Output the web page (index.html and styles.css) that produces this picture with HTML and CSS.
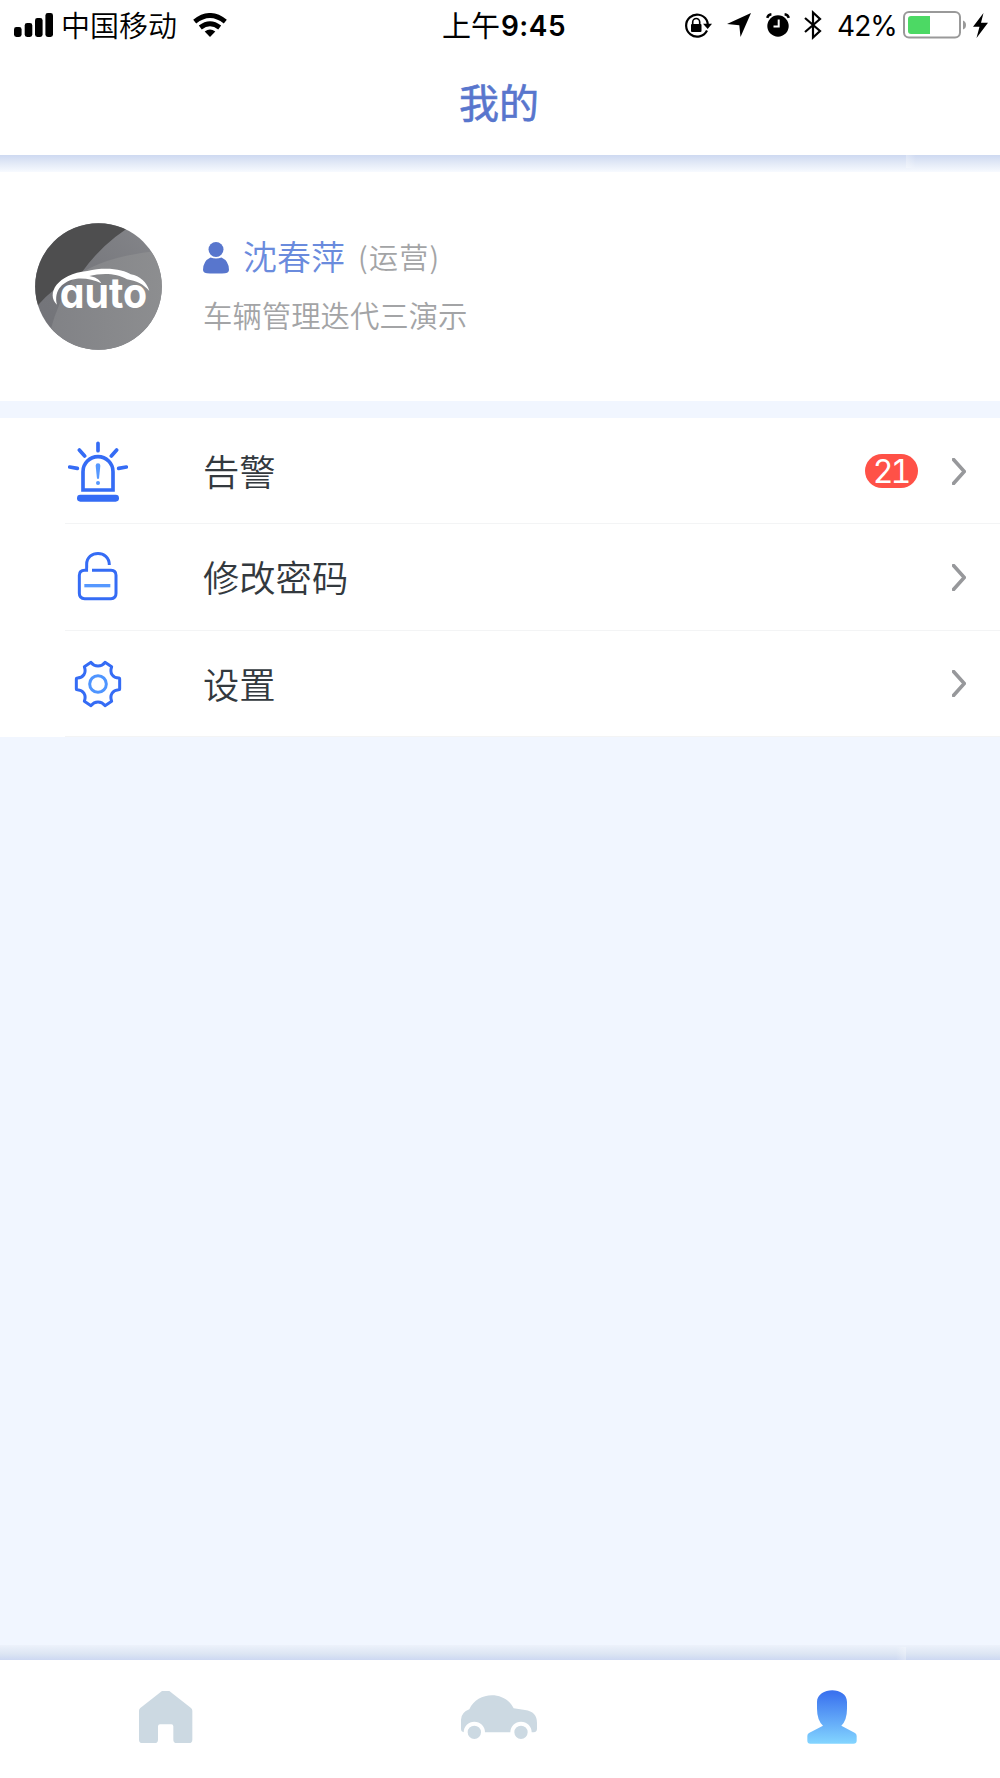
FILE: index.html
```html
<!DOCTYPE html>
<html lang="zh-CN">
<head>
<meta charset="utf-8">
<title>我的</title>
<link rel="stylesheet" href="styles.css">
</head>
<body>
<div class="app">
  <header class="header">
    <div class="status">
      <div class="status-left">
        <svg class="signal" width="39" height="24" viewBox="0 0 39 24"><rect x="0" y="14" width="7.6" height="10" rx="2.4"/><rect x="10.700" y="10" width="7.600" height="14" rx="2.400"/><rect x="21" y="5" width="7.600" height="19" rx="2.400"/><rect x="31.400" y="0" width="7.600" height="24" rx="2.400"/></svg>
        <span class="carrier">中国移动</span>
        <svg class="wifi" width="34" height="24" viewBox="0 0 34 24"><g fill="none" stroke="#000" stroke-width="4.800"><path d="M1.700 8.600Q17-3.700 32.300 8.600"/><path d="M7.300 14.500Q17 7.100 26.700 14.500"/></g><path d="M11.700 18.400Q17 14.800 22.300 18.400L17 24Z"/></svg>
      </div>
      <div class="clock"><span class="ampm">上午</span><span class="time">9:45</span></div>
      <div class="status-right">
        <svg width="28" height="25" viewBox="0 0 28 25"><path d="M23 17.500A11 11 0 1 1 22.600 7Q23.500 8.500 23.800 11.500" fill="none" stroke="#000" stroke-width="2.200"/><path d="M19 10.700H28L23.700 16Z"/><rect x="7" y="11" width="10.500" height="8" rx="1"/><path d="M8.700 12V9a3.500 3.500 0 0 1 7 0v3" fill="none" stroke="#000" stroke-width="1.600"/></svg>
        <svg class="arrow" width="24" height="24" viewBox="0 0 24 24"><path d="M24 0L13.500 24L12.300 12.200L0 11Z"/></svg>
        <svg class="alarm" width="24" height="24" viewBox="0 0 24 24"><circle cx="12" cy="13" r="10.700"/><path d="M1.200 4.800Q2.200 1.700 5.400 1.300M22.800 4.800Q21.800 1.700 18.600 1.300" fill="none" stroke="#000" stroke-width="2.500"/><path d="M12.700 6.500V13.500H7.500" fill="none" stroke="#fff" stroke-width="2"/></svg>
        <svg class="bluetooth" width="18" height="30" viewBox="0 0 18 30"><path d="M1 8L16 21L9 27.500V2.500L16 9L1 22" fill="none" stroke="#000" stroke-width="2.200"/></svg>
        <span class="percent">42%</span>
        <svg class="battery" width="64" height="28" viewBox="0 0 64 28"><rect x="1" y="1" width="56" height="25.500" rx="5" fill="#fff" stroke="#999" stroke-width="2"/><path d="M60 9.500Q63 10.500 63 14T60 18.500Z" fill="#999"/><path d="M8 5H27V23H8Q5 23 5 20V8Q5 5 8 5Z" fill="#4cd964"/></svg>
        <svg class="bolt" width="15" height="25" viewBox="0 0 15 25"><path d="M10.500 0L0 13.700H6.500L3.500 25L15 9.800H8Z"/></svg>
      </div>
    </div>
    <h1 class="title">我的</h1>
  </header>
  <div class="header-shade"></div>

  <section class="profile">
    <svg class="avatar" width="127" height="127" viewBox="105 69 381 381">
      <defs>
        <clipPath id="disc"><circle cx="295.500" cy="259.500" r="190"/></clipPath>
        <linearGradient id="mid" x1="0" y1="1" x2="1" y2="0"><stop offset="0" stop-color="#727378"/><stop offset=".5" stop-color="#77787d"/><stop offset="1" stop-color="#86878b"/></linearGradient>
        <linearGradient id="fore"><stop offset="0" stop-color="#818286"/><stop offset="1" stop-color="#8d8e90"/></linearGradient>
      </defs>
      <g clip-path="url(#disc)">
        <rect x="105" y="69" width="381" height="381" fill="url(#mid)"/>
        <path d="M105 69H410Q315 120 246 216Q170 250 105 325Z" fill="#4e4e4f"/>
        <path d="M150 395Q173 308 220 235Q310 166 490 151V460H150Z" fill="url(#fore)"/>
      </g>
      <path d="M171 314C137 281 172 222 262 213C320 199 374 210 392 223C420 227 441 248 448 273C430 252 409 243 381 238C350 218 302 219 268 228C285 231 297 237 304 250C282 238 254 234 230 236C190 242 160 269 171 314Z" fill="#fff"/>
      <text class="logo-text" x="179" y="325" textLength="262" lengthAdjust="spacingAndGlyphs">auto</text>
    </svg>
    <div class="profile-info">
      <div class="name-line">
        <svg width="26" height="32" viewBox="0 0 26 32"><circle cx="13" cy="7.500" r="7.500"/><path d="M7.500 15.500Q13 17.500 18.500 15.500Q26 19 26 28Q26 31.500 19 31.500H7Q0 31.500 0 28Q0 19 7.500 15.500Z"/></svg>
        <span class="name">沈春萍</span><span class="role">(运营)</span>
      </div>
      <div class="company">车辆管理迭代三演示</div>
    </div>
  </section>

  <nav class="menu">
    <a class="row">
      <span class="row-icon"><svg width="60" height="62" viewBox="0 0 180 186"><g fill="none" stroke="#356cf5" stroke-width="11"><path d="M45 150V95a45 45 0 0 1 90 0v55Z"/><path d="M90 10V32M34 30L50 48M146 30L130 48M5 81L28 85M175 81L152 85" stroke-linecap="round"/></g><rect x="27" y="164" width="126" height="21" rx="10" fill="#356cf5"/><path d="M83 77Q83 70 90 70T97 77L93 116H87Z" fill="#5698ff"/><circle cx="90" cy="129" r="6" fill="#5698ff"/></svg></span>
      <span class="label">告警</span><span class="badge">21</span>
      <svg class="chevron" width="14" height="27" viewBox="0 0 14 27"><path d="M1.500 1.500L12.300 13.500L1.500 25.500"/></svg>
    </a>
    <a class="row">
      <span class="row-icon"><svg class="lock" width="60" height="50" viewBox="0 0 180 150"><g fill="none" stroke="#356cf5" stroke-width="9"><path d="M75 58H132Q147 58 147 73V127Q147 143 132 143H53Q37 143 37 127V73Q37 58 53 58H59V40C59-3 127-5 127 42" /></g><rect x="64" y="50" width="11" height="15" fill="#fff"/><path d="M52 104H130" stroke="#5698ff" stroke-width="10"/></svg></span>
      <span class="label">修改密码</span>
      <svg class="chevron" width="14" height="27" viewBox="0 0 14 27"><path d="M1.500 1.500L12.300 13.500L1.500 25.500"/></svg>
    </a>
    <a class="row">
      <span class="row-icon"><svg class="gear" width="48" height="48" viewBox="102 809 144 144"><path d="M133 829L153 816C164 831 184 831 195 816L215 829C208 848 218 863 237 863Q239 863 239 867V895Q239 898 236 898C218 899 208 914 215 933L195 946C184 931 164 931 153 946L133 933C140 914 130 899 112 898Q109 898 109 895V867Q109 863 112 863C130 862 140 848 133 829Z" fill="none" stroke="#356cf5" stroke-width="9" stroke-linejoin="round"/><circle cx="174" cy="881" r="25" fill="none" stroke="#4f95ff" stroke-width="9"/></svg></span>
      <span class="label">设置</span>
      <svg class="chevron" width="14" height="27" viewBox="0 0 14 27"><path d="M1.500 1.500L12.300 13.500L1.500 25.500"/></svg>
    </a>
  </nav>

  <div class="spacer"></div>
  <div class="tab-shade"></div>
  <footer class="tabs">
    <a class="tab"><svg width="54" height="52" viewBox="119 182 162 156" fill="#ccd9e2"><path d="M188 182H210L275 233Q279 236 279 241V328Q279 338 269 338H232Q222 338 222 328V288Q222 282 216 282H182Q176 282 176 288V328Q176 338 166 338H129Q119 338 119 328V241Q119 236 123 233Z"/></svg></a>
    <a class="tab"><svg width="76" height="45" viewBox="1083 194 228 135"><path d="M1108 237C1132 182 1215 180 1241 234L1275 239Q1311 244 1311 278V295Q1311 305 1301 306H1092Q1083 304 1083 296V268Q1084 246 1108 237Z" fill="#ccd9e2"/><g fill="#ccd9e2" stroke="#fff" stroke-width="12"><circle cx="1123" cy="306" r="26"/><circle cx="1263" cy="306" r="26"/></g></svg></a>
    <a class="tab"><svg width="50" height="54" viewBox="142 180 150 162"><defs><linearGradient id="person" x1="0" y1="0" x2="0" y2="1"><stop offset=".05" stop-color="#3b73ef"/><stop offset="1" stop-color="#83d5ff"/></linearGradient></defs><path d="M172 216C172 170 262 168 262 216V236Q262 270 245 287L286 309Q291 312 291 318V332Q291 341 281 341H152Q143 341 143 332V318Q143 312 148 309L190 287Q172 270 172 236Z" fill="url(#person)"/></svg></a>
  </footer>
</div>
</body>
</html>
```
FILE: styles.css
```css
* { box-sizing: border-box; }
body {
  margin: 0;
  background: #fff;
  font-family: Inter, "Noto Sans CJK SC", sans-serif;
  color: #33393e;
}
svg { display: block; flex: none; }
.app { display: flex; flex-direction: column; width: 1000px; height: 1778px; background: #f1f6ff; }

.header { height: 155px; background: #fff; }
.status {
  display: grid;
  grid-template-columns: 1fr auto 1fr;
  align-items: center;
  height: 50px;
  padding: 0 12px 0 14px;
  color: #000;
  line-height: 50px;
}
.status-left, .status-right, .clock { display: flex; align-items: center; height: 50px; white-space: nowrap; }
.status-right { justify-content: flex-end; }
.carrier { margin-left: 8px; padding-top: 3px; font-size: 29px; font-weight: 350; }
.wifi { margin-left: 16px; }
.clock { margin-left: 6px; }
.ampm { padding-top: 3px; font-size: 29px; font-weight: 400; }
.time { padding-top: 1px; margin-left: 1px; font-size: 28px; font-weight: 600; letter-spacing: 0.5px; }
.arrow { margin-left: 15px; }
.alarm { margin-left: 15px; }
.bluetooth { margin-left: 14px; }
.percent { margin-left: 15px; padding-top: 1px; width: 66px; font-size: 28px; letter-spacing: -0.9px; }
.bolt { margin-left: 6px; }
.title { margin: 0; height: 105px; padding-right: 2px; line-height: 107px; font-size: 40px; font-weight: 400; -webkit-text-stroke: 0.6px #5876cd; text-align: center; color: #5876cd; }
.header-shade {
  height: 17px;
  background:
    linear-gradient(90deg, rgba(255, 255, 255, 0.3), rgba(255, 255, 255, 0)) 906px 0 / 10px 13px no-repeat,
    linear-gradient(#ced9f1, #e3eaf7 50%, #f7faff);
}

.profile { display: flex; align-items: center; height: 229px; padding-left: 35px; background: #fff; }
.logo-text { font-family: Inter, sans-serif; font-size: 126px; font-weight: 700; font-feature-settings: "cv11"; fill: #fff; }
.profile-info { margin-left: 41px; }
.name-line { display: flex; align-items: center; height: 58px; line-height: 54px; color: #6a8bdd; }
.name-line svg { fill: #5876cd; }
.name { margin-left: 14px; font-size: 34px; font-weight: 350; }
.role { margin-left: 13px; padding-bottom: 3px; font-family: "Noto Sans CJK SC", sans-serif; font-size: 29px; font-weight: 350; letter-spacing: 1.3px; color: #a3a4a6; }
.company { height: 58px; line-height: 59px; font-size: 29.4px; font-weight: 350; color: #a3a4a6; }

.menu { display: grid; grid-template-rows: repeat(3, 1fr); height: 319px; margin-top: 17px; background: #fff; }
.row { display: flex; align-items: center; padding-right: 34px; background: linear-gradient(#f3f4f5, #f3f4f5) 65px 100% / 100% 1px no-repeat; }
.row-icon { display: flex; justify-content: center; width: 196px; }
.lock { margin: 0 2px 2px 0; }
.gear { margin-top: 1px; }
.label { flex: 1; padding: 0 0 2px 7px; font-size: 36.3px; font-weight: 350; }
.badge { width: 53px; height: 34px; margin-right: 34px; border-radius: 17px; background: #ff5147; color: #fff; font-size: 32px; line-height: 35px; font-weight: 400; font-feature-settings: "tnum"; letter-spacing: -3px; padding-right: 2px; text-align: center; }
.chevron path { fill: none; stroke: #97989b; stroke-width: 3.6; stroke-linecap: round; }

.spacer { flex: 1; }
.tab-shade {
  height: 15px;
  background:
    linear-gradient(270deg, rgba(255, 255, 255, 0.3), rgba(255, 255, 255, 0)) 896px 2px / 10px 13px no-repeat,
    linear-gradient(#edf2fb, #dce5f3 60%, #cdd8f2);
}
.tabs { display: grid; grid-template-columns: repeat(3, 1fr); height: 118px; padding: 0 2px 4px 0; background: #fff; }
.tab { display: flex; justify-content: center; align-items: center; }
```
